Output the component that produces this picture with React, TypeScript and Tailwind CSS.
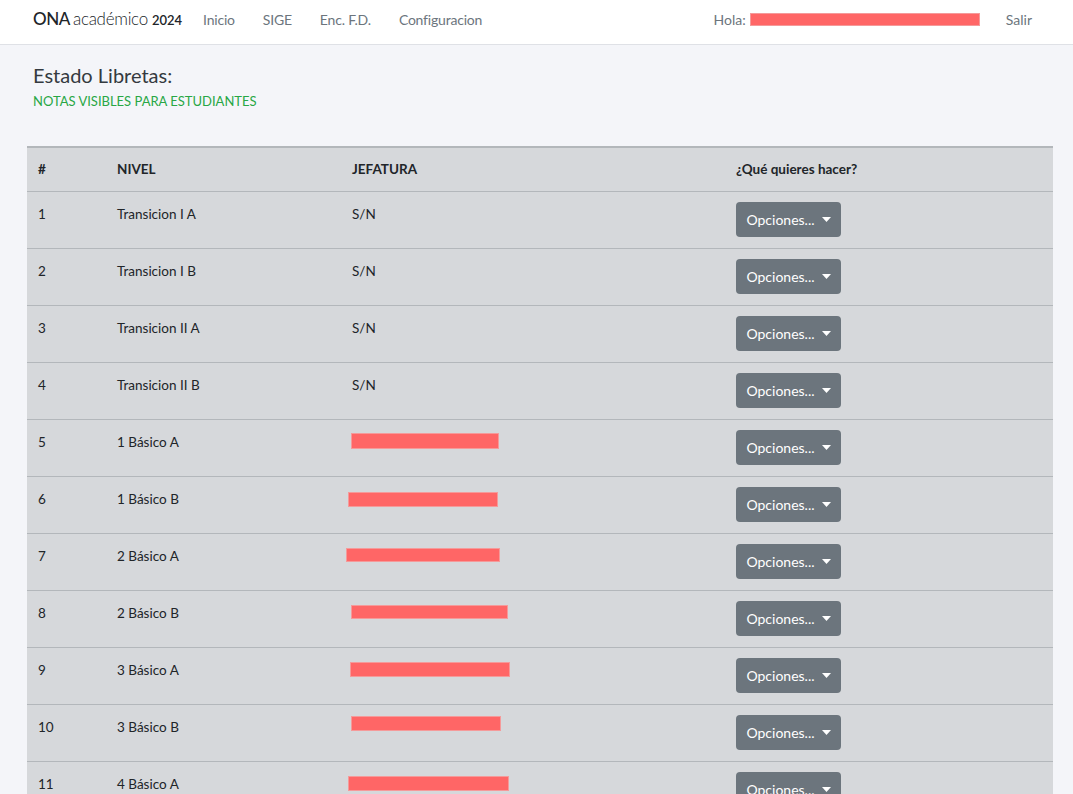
import React from 'react';

interface Row {
  n: number;
  nivel: string;
  jefe?: { ml: number; w: number; mt: number; h: number };
}

const rows: Row[] = [
  { n: 1, nivel: 'Transicion I A' },
  { n: 2, nivel: 'Transicion I B' },
  { n: 3, nivel: 'Transicion II A' },
  { n: 4, nivel: 'Transicion II B' },
  { n: 5, nivel: '1 Básico A', jefe: { ml: -1, w: 148, mt: 1, h: 16 } },
  { n: 6, nivel: '1 Básico B', jefe: { ml: -4, w: 150, mt: 3, h: 15 } },
  { n: 7, nivel: '2 Básico A', jefe: { ml: -6, w: 154, mt: 2, h: 14 } },
  { n: 8, nivel: '2 Básico B', jefe: { ml: -1, w: 157, mt: 2, h: 14 } },
  { n: 9, nivel: '3 Básico A', jefe: { ml: -2, w: 160, mt: 2, h: 15 } },
  { n: 10, nivel: '3 Básico B', jefe: { ml: -1, w: 150, mt: -1, h: 15 } },
  { n: 11, nivel: '4 Básico A', jefe: { ml: -4, w: 161, mt: 2, h: 15 } },
];

const App: React.FC = () => {
  return (
    <div className="min-h-screen bg-[#f4f5f9] font-['Lato','Noto_Sans',sans-serif] text-[#212529]">
      {/* barra superior */}
      <nav className="h-[45px] bg-white border-b border-[#dfe1e6] flex items-center pb-[6px] pl-[33px] pr-[41px] text-[14px]">
        <div className="flex items-baseline text-[#212529]">
          <span className="text-[17px] font-medium tracking-[-0.4px]">ONA</span>
          <span className="text-[17px] font-light ml-[3px] tracking-[-0.3px]">académico</span>
          <span className="text-[13px] font-semibold ml-[4px]">2024</span>
        </div>
        <div className="flex gap-[28px] ml-[21px] text-[#6c757d] tracking-[-0.2px]">
          <span>Inicio</span>
          <span>SIGE</span>
          <span>Enc. F.D.</span>
          <span>Configuracion</span>
        </div>
        <div className="ml-auto flex items-center text-[#6c757d]">
          <span>Hola:</span>
          <span className="ml-[4px] w-[230px] h-[13px] bg-[#ff6666] border border-[#f59a9a]" />
          <span className="ml-[26px]">Salir</span>
        </div>
      </nav>

      <div className="px-[27px] pt-[18px]">
        <div className="pl-[6px]">
          <h1 className="text-[20px] text-[#343a40] leading-[24px]">Estado Libretas:</h1>
          <p className="text-[13px] text-[#28a745] mt-[6px] leading-[16px]">NOTAS VISIBLES PARA ESTUDIANTES</p>
        </div>

        <table className="w-[1026px] mt-[37px] bg-[#d6d8db] text-[13.5px] border-collapse">
          <thead>
            <tr className="border-t-2 border-b border-[#b3b7bb] h-[44px] text-left">
              <th className="w-[79px] pl-[11px] font-bold">#</th>
              <th className="w-[235px] pl-[11px] font-bold">NIVEL</th>
              <th className="w-[384px] pl-[11px] font-bold">JEFATURA</th>
              <th className="pl-[11px] font-bold">¿Qué quieres hacer?</th>
            </tr>
          </thead>
          <tbody>
            {rows.map((r) => (
              <tr key={r.n} className="border-b border-[#b3b7bb] h-[57px] align-top">
                <td className="pl-[11px] pt-[12px]">{r.n}</td>
                <td className="pl-[11px] pt-[12px]">{r.nivel}</td>
                <td className="pl-[11px] pt-[12px]">
                  {r.jefe ? (
                    <div
                      className="bg-[#ff6666] border border-[#f59a9a]"
                      style={{ marginLeft: r.jefe.ml, width: r.jefe.w, marginTop: r.jefe.mt, height: r.jefe.h }}
                    />
                  ) : (
                    'S/N'
                  )}
                </td>
                <td className="pl-[11px] pt-[10px]">
                  <button className="h-[35px] w-[105px] rounded-[4px] bg-[#6c757d] text-white text-[14px] flex items-center justify-center gap-[7px]">
                    Opciones...
                    <svg width="9" height="5" viewBox="0 0 9 5">
                      <path d="M0 0h9L4.5 5z" fill="white" />
                    </svg>
                  </button>
                </td>
              </tr>
            ))}
          </tbody>
        </table>
      </div>
    </div>
  );
};

export default App;
